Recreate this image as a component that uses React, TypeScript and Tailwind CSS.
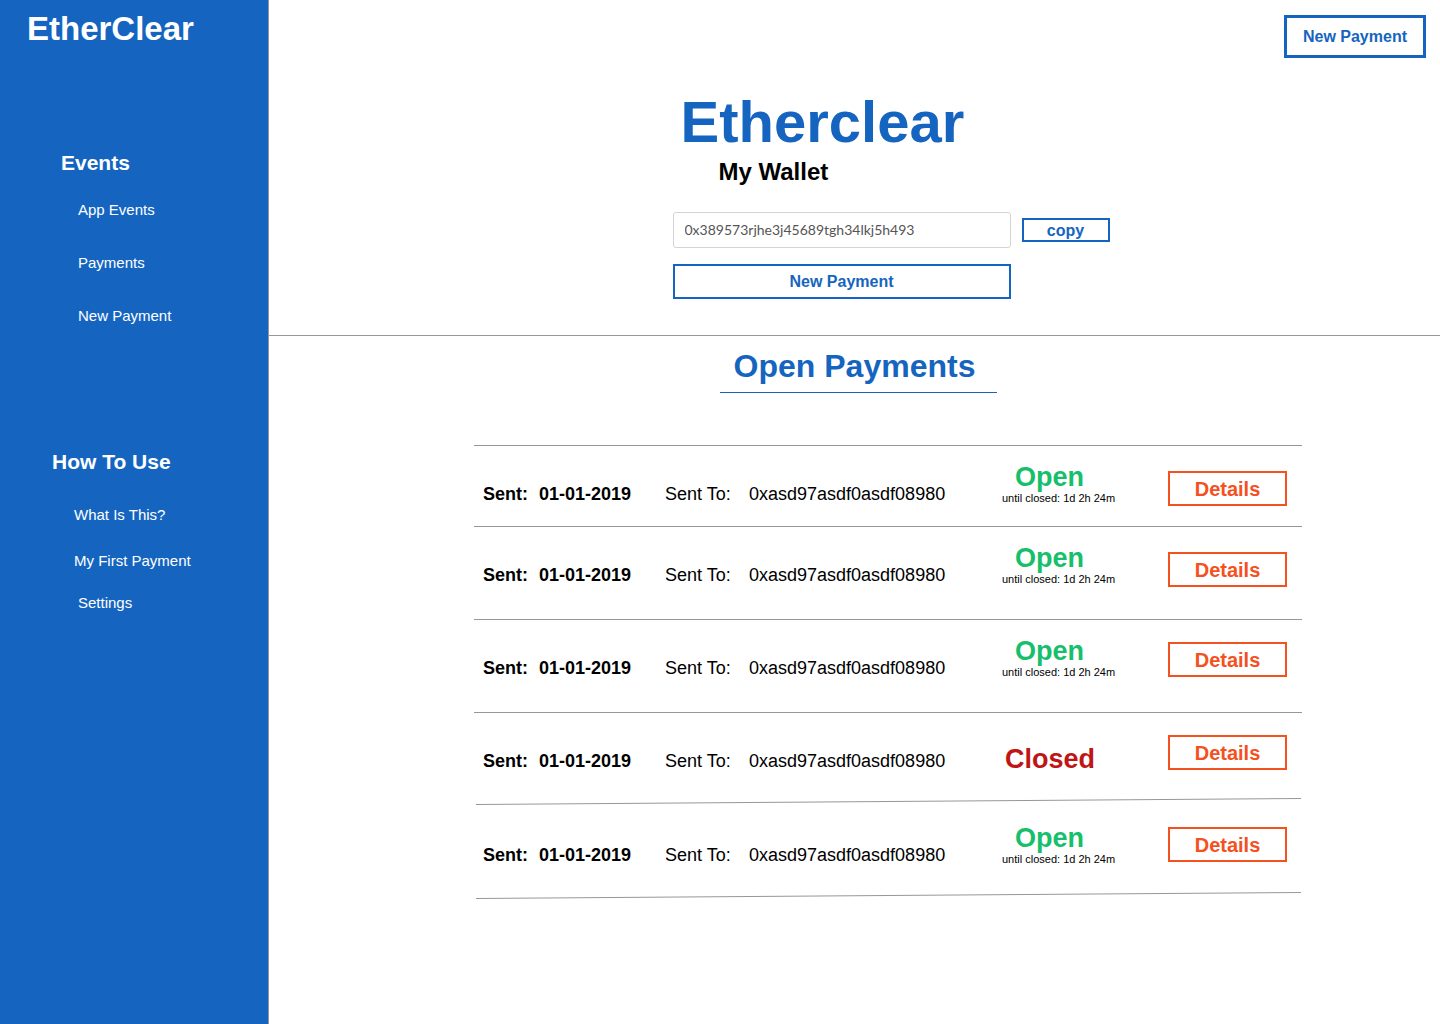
import React from "react";

type Payment = {
  id: number;
  status: "Open" | "Closed";
  height: string;
  textPad: string;
  statusPad: string;
  buttonPad: string;
  slantedRule: boolean;
};

const payments: Payment[] = [
  { id: 1, status: "Open", height: "h-[80px]", textPad: "pt-9", statusPad: "pt-4", buttonPad: "pt-[25px]", slantedRule: false },
  { id: 2, status: "Open", height: "h-[92px]", textPad: "pt-9", statusPad: "pt-4", buttonPad: "pt-[25px]", slantedRule: false },
  { id: 3, status: "Open", height: "h-[92px]", textPad: "pt-9", statusPad: "pt-4", buttonPad: "pt-[22px]", slantedRule: false },
  { id: 4, status: "Closed", height: "h-[85px]", textPad: "pt-9", statusPad: "pt-[31px]", buttonPad: "pt-[22px]", slantedRule: true },
  { id: 5, status: "Open", height: "h-[87px]", textPad: "pt-[38px]", statusPad: "pt-[18px]", buttonPad: "pt-[22px]", slantedRule: true },
];

function Rule({ slanted }: { slanted: boolean }) {
  return (
    <tr aria-hidden="true">
      <td colSpan={6} className="p-0">
        {slanted ? (
          <svg className="block h-[7px] w-full" viewBox="0 0 828 7" preserveAspectRatio="none">
            <line x1="2" y1="6.5" x2="827" y2="0.5" stroke="#979797" strokeWidth="1" />
          </svg>
        ) : (
          <div className="h-px bg-[#979797]" />
        )}
      </td>
    </tr>
  );
}

function PaymentRow({ payment }: { payment: Payment }) {
  const open = payment.status === "Open";
  return (
    <>
      <tr className={`align-top ${payment.height}`}>
        <th scope="row" className={`pl-[9px] text-left text-lg leading-6 font-bold ${payment.textPad}`}>
          Sent:
        </th>
        <td className={`text-lg leading-6 font-bold ${payment.textPad}`}>01-01-2019</td>
        <td className={`text-lg leading-6 ${payment.textPad}`}>Sent To:</td>
        <td className={`text-lg leading-6 ${payment.textPad}`}>0xasd97asdf0asdf08980</td>
        <td className={payment.statusPad}>
          {open ? (
            <>
              <div className="pl-[31px] text-[27px] leading-[30px] font-bold text-[#17bf6c]">Open</div>
              <div className="pl-[18px] text-[11px] leading-3">until closed: 1d 2h 24m</div>
            </>
          ) : (
            <div className="pl-[21px] text-[27px] leading-[30px] font-bold text-[#c01515]">Closed</div>
          )}
        </td>
        <td className={`pr-[15px] ${payment.buttonPad}`}>
          <button
            type="button"
            className="block h-[35px] w-full border-2 border-[#f4511e] text-xl leading-6 font-bold text-[#f4511e]"
          >
            Details
          </button>
        </td>
      </tr>
      <Rule slanted={payment.slantedRule} />
    </>
  );
}

function Sidebar() {
  return (
    <aside className="w-[269px] shrink-0 border-r border-[#979797] bg-[#1565c0] pt-[9px] text-white">
      <div className="pl-[27px] text-[33px] leading-10 font-bold">EtherClear</div>
      <nav className="text-[15px] leading-5">
        <h2 className="mt-[100px] pl-[61px] text-[21px] leading-7 font-bold">Events</h2>
        <ul className="mt-[23px] flex flex-col gap-[33px] pl-[78px]">
          <li><a href="#app-events">App Events</a></li>
          <li><a href="#payments">Payments</a></li>
          <li><a href="#new-payment">New Payment</a></li>
        </ul>
        <h2 className="mt-[122px] pl-[52px] text-[21px] leading-7 font-bold">How To Use</h2>
        <ul className="mt-[29px] pl-[74px]">
          <li><a href="#about">What Is This?</a></li>
          <li className="mt-[26px]"><a href="#first-payment">My First Payment</a></li>
          <li className="mt-[22px] pl-1"><a href="#settings">Settings</a></li>
        </ul>
      </nav>
    </aside>
  );
}

export default function App() {
  return (
    <div className="flex min-h-screen bg-white font-['Liberation_Sans',Arial,sans-serif] text-black">
      <Sidebar />
      <main className="min-w-0 flex-1">
        <section className="border-b border-[#979797] pb-9">
          <header className="flex justify-end pt-[15px] pr-[14px]">
            <button
              type="button"
              className="h-[43px] border-3 border-[#1565c0] px-4 text-base font-bold text-[#1565c0]"
            >
              New Payment
            </button>
          </header>
          <div className="flex justify-center pt-8 pl-[74px]">
            <div className="w-[438px]">
              <h1 className="pl-2 text-[58px] leading-[64px] font-bold text-[#1565c0]">Etherclear</h1>
              <h2 className="mt-1 pl-[46px] text-2xl leading-7 font-bold">My Wallet</h2>
              <div className="mt-[26px] flex items-center gap-[11px]">
                <input
                  type="text"
                  readOnly
                  aria-label="Wallet address"
                  defaultValue="0x389573rjhe3j45689tgh34lkj5h493"
                  className="h-9 w-[338px] rounded-[3px] border border-[#d4d4d5] px-[11px] pb-[2px] font-['Lato',sans-serif] text-sm text-[#555]"
                />
                <button
                  type="button"
                  className="h-6 w-[88px] border-2 border-[#1565c0] pt-[2px] text-base leading-[18px] font-bold text-[#1565c0]"
                >
                  copy
                </button>
              </div>
              <button
                type="button"
                className="mt-4 block h-[35px] w-[338px] border-2 border-[#1565c0] pt-px text-base font-bold text-[#1565c0]"
              >
                New Payment
              </button>
            </div>
          </div>
        </section>

        <section>
          <div className="flex justify-center pt-3 pl-2">
            <h2 className="w-[277px] border-b border-[#1565c0] pr-2 pb-2 text-center text-[32px] leading-9 font-bold text-[#1565c0]">
              Open Payments
            </h2>
          </div>
          <div className="mt-[52px] flex justify-center pl-[67px]">
            <table className="w-[828px] table-fixed border-collapse">
              <colgroup>
                <col className="w-[65px]" />
                <col className="w-[126px]" />
                <col className="w-[84px]" />
                <col className="w-[235px]" />
                <col className="w-[184px]" />
                <col className="w-[134px]" />
              </colgroup>
              <tbody>
                <Rule slanted={false} />
                {payments.map((payment) => (
                  <PaymentRow key={payment.id} payment={payment} />
                ))}
              </tbody>
            </table>
          </div>
        </section>
      </main>
    </div>
  );
}
